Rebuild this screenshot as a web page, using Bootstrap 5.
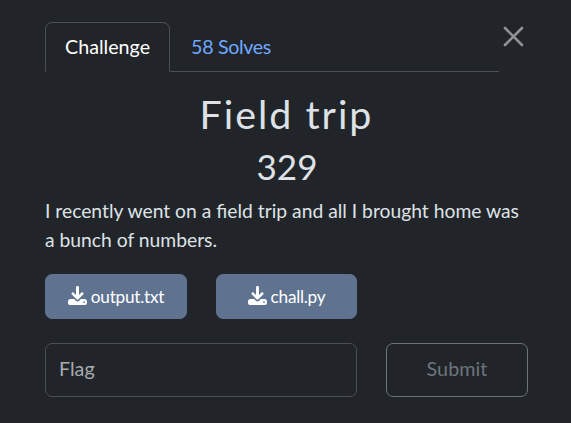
<!DOCTYPE html>
<html lang="en" data-bs-theme="dark">
<head>
<meta charset="utf-8">
<meta name="viewport" content="width=device-width, initial-scale=1">
<title>Field trip</title>
<link href="https://cdn.jsdelivr.net/npm/bootstrap@5.3.0/dist/css/bootstrap.min.css" rel="stylesheet">
<style>
html{font-size:19.7px}
body{font-family:Lato,"Open Sans",sans-serif;background:#212529;color:#dee2e6;line-height:1.5;overflow:hidden}
.challenge{padding:22px 43px 0 45px}
.tab-row{width:454px;height:50px}
.nav-tabs{--bs-nav-tabs-border-color:#495057;--bs-nav-link-color:#6ea8fe;height:50px}
.nav-tabs .nav-link{height:50px;padding:9px 19px}
.nav-tabs .nav-link.active{color:#fff;background:#212529;border-color:#495057 #495057 #212529}
.nav-tabs .nav-link.solves{padding-left:20px;letter-spacing:-.35px}
.close-btn{margin:4px 4px 0 0;line-height:0;color:#909294}
.chal-name{font-size:39.4px;letter-spacing:2px;line-height:47px;margin:18px 0 0;font-weight:400;color:#dee2e6}
.chal-value{font-size:35px;line-height:42px;margin:8px 0 0;padding-left:1px;font-weight:400;color:#dee2e6}
.chal-desc{font-size:19.3px;margin:9px 0 0;line-height:29px}
.controls{display:grid;grid-template-columns:142px 141px 142px;column-gap:29px}
.files{margin-top:20px}
.answer{margin-top:24px}
.btn-file{--bs-btn-color:#fff;--bs-btn-bg:#5f7390;--bs-btn-border-color:#5f7390;height:45px;font-size:17.2px;letter-spacing:-.25px;padding:0;border-radius:7px}
.btn-file svg{margin-right:4px;margin-top:-2px}
.flag-input{grid-column:span 2;height:54px;border-color:#495057;background:#212529;padding:0 13px 3px;border-radius:7px}
.flag-input::placeholder{color:#a7acb1}
.btn-submit{height:54px;border:1px solid #6c757d;color:#6c757d;letter-spacing:.1px;border-radius:7px;padding:0 0 2px}
</style>
</head>
<body>
<main class="challenge">
  <div class="d-flex justify-content-between align-items-start">
    <div class="tab-row">
      <ul class="nav nav-tabs">
        <li class="nav-item"><a class="nav-link active" href="#">Challenge</a></li>
        <li class="nav-item"><a class="nav-link solves" href="#">58 Solves</a></li>
      </ul>
    </div>
    <button class="btn p-0 border-0 close-btn" aria-label="Close"><svg width="21" height="21" viewBox="0 0 21 21" fill="none" stroke="currentColor" stroke-width="2.6" stroke-linecap="round"><path d="M2 2l17 17M19 2L2 19"/></svg></button>
  </div>
  <h2 class="chal-name text-center">Field trip</h2>
  <h3 class="chal-value text-center">329</h3>
  <p class="chal-desc">I recently went on a field trip and all I brought home was a bunch of numbers.</p>
  <div class="controls files">
    <a class="btn btn-file d-flex align-items-center justify-content-center" href="#"><svg width="19" height="19" viewBox="0 0 512 512" fill="currentColor"><path d="M296 32c0-22-18-32-40-32s-40 10-40 32v210l-62-62c-15-15-37-15-50 0s-13 37 0 50l127 127c14 14 36 14 50 0l127-127c13-13 13-35 0-50s-35-15-50 0l-62 62zM64 352c-35 0-64 29-64 64v32c0 35 29 64 64 64h384c35 0 64-29 64-64v-32c0-35-29-64-64-64H346l-45 45c-25 25-65 25-90 0l-46-45zm368 56a24 24 0 1 1 0 48 24 24 0 1 1 0-48z"/></svg>output.txt</a>
    <a class="btn btn-file d-flex align-items-center justify-content-center" href="#"><svg width="19" height="19" viewBox="0 0 512 512" fill="currentColor"><path d="M296 32c0-22-18-32-40-32s-40 10-40 32v210l-62-62c-15-15-37-15-50 0s-13 37 0 50l127 127c14 14 36 14 50 0l127-127c13-13 13-35 0-50s-35-15-50 0l-62 62zM64 352c-35 0-64 29-64 64v32c0 35 29 64 64 64h384c35 0 64-29 64-64v-32c0-35-29-64-64-64H346l-45 45c-25 25-65 25-90 0l-46-45zm368 56a24 24 0 1 1 0 48 24 24 0 1 1 0-48z"/></svg>chall.py</a>
  </div>
  <div class="controls answer">
    <input class="form-control flag-input" type="text" placeholder="Flag">
    <button class="btn btn-submit">Submit</button>
  </div>
</main>
<script src="https://cdn.jsdelivr.net/npm/bootstrap@5.3.0/dist/js/bootstrap.bundle.min.js"></script>
</body>
</html>
